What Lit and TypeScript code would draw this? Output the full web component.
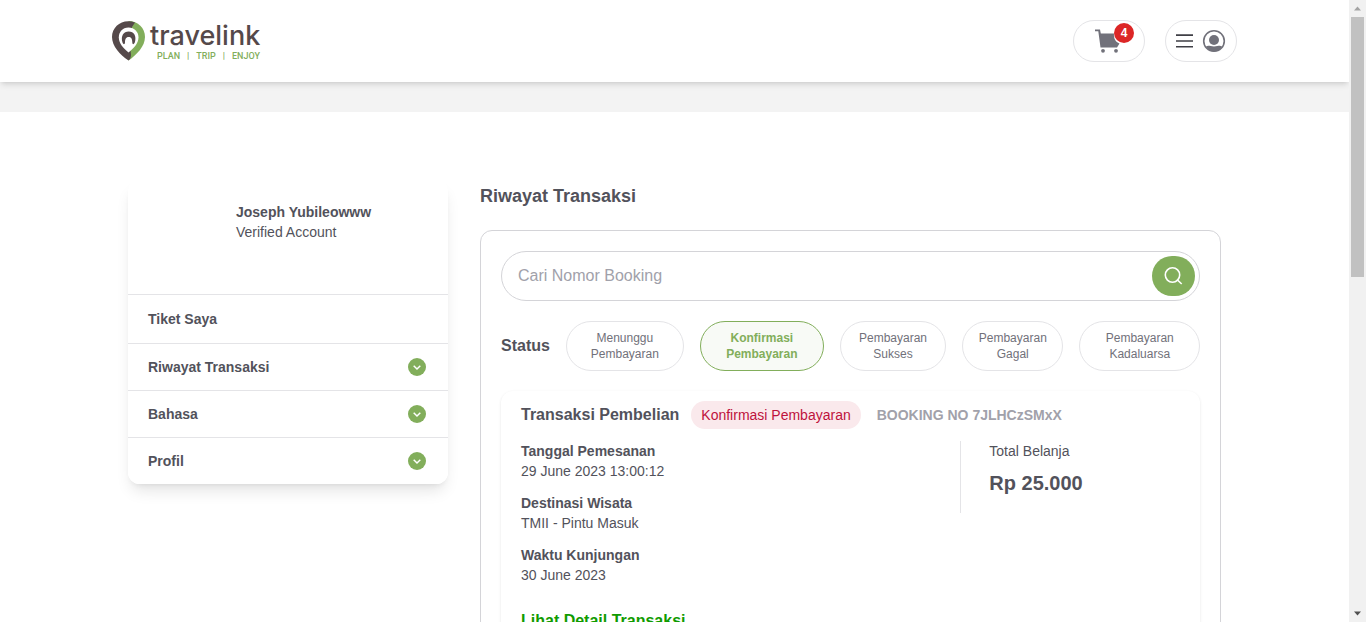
import { LitElement, html, css } from "lit";
import { customElement, state } from "lit/decorators.js";

const GREEN = "#82ae5b";

@customElement("travelink-logo")
class TravelinkLogo extends LitElement {
  static styles = css`
    :host { display: block; }
    .logo { display: flex; align-items: center; gap: 5px; text-decoration: none; }
    .mark { width: 33px; height: 40px; display: block; }
    .words { display: flex; flex-direction: column; padding-top: 2px; }
    .name { font: 500 27px/29px Inter, sans-serif; color: #55494a; }
    .tag {
      display: flex; gap: 7px; padding-left: 7px;
      font: 500 9px/13px Roboto, sans-serif; color: #82ae5b;
    }
  `;
  render() {
    return html`
      <a class="logo" href="#" aria-label="travelink">
        <svg class="mark" viewBox="0 0 33 40" aria-hidden="true">
          <path d="M16.500 0C26 0 33 7 33 16C33 25 25 33.500 16.500 39.500Z" fill="${GREEN}" />
          <path d="M23 1.500C11 -3 0 5 0 16C0 25 8 34 16.500 39.500C19.500 37 19.500 33 18 28L20 6Z" fill="#55494a" />
          <path d="M16.500 6.500C10.500 6.500 6.800 11 6.800 16.500C6.800 22 11 27 16.500 31.500C22 27 26.500 22 26.500 16.500C26.500 11 22.500 6.500 16.500 6.500Z" fill="#fff" />
          <path d="M10.500 21.500C8.500 15 11.500 10.500 16.700 10.500C22 10.500 24.800 15 22.800 21.500C21.500 24 20.500 23.500 20.300 21.500C20.300 17.500 19 16 16.700 16C14.400 16 13 17.500 13 21.500C12.800 23.500 11.500 24 10.500 21.500Z" fill="#55494a" />
        </svg>
        <span class="words">
          <span class="name">travelink</span>
          <span class="tag"><span>PLAN</span><span>|</span><span>TRIP</span><span>|</span><span>ENJOY</span></span>
        </span>
      </a>
    `;
  }
}

@customElement("app-header")
class AppHeader extends LitElement {
  static styles = css`
    :host { display: block; position: relative; z-index: 1; }
    .bar {
      box-sizing: border-box; height: 82px; padding: 0 112px;
      display: flex; align-items: center; justify-content: space-between;
      background: #fff;
      box-shadow: 0 4px 6px -1px rgba(0, 0, 0, .1), 0 2px 4px -2px rgba(0, 0, 0, .1);
    }
    .actions { display: flex; gap: 20px; }
    .pill {
      box-sizing: border-box; width: 72px; height: 42px; padding: 0;
      display: flex; align-items: center; justify-content: center; gap: 9px;
      border: 1px solid #e4e4e7; border-radius: 21px; background: #fff;
      position: relative; cursor: pointer;
    }
    .cart { width: 28px; height: 24px; }
    .count {
      position: absolute; top: 2px; right: 10px;
      width: 20px; height: 20px; border-radius: 50%;
      background: #dc2626; color: #fff;
      font: 700 12px/20px "Liberation Sans", Arial, sans-serif; text-align: center;
    }
    .lines { width: 17px; height: 14px; }
    .user { width: 24px; height: 24px; }
  `;
  render() {
    return html`
      <header class="bar">
        <travelink-logo></travelink-logo>
        <div class="actions">
          <button class="pill" aria-label="Cart">
            <svg class="cart" viewBox="0 0 28 24" fill="#71717a" aria-hidden="true">
              <path d="M0 .5H5L5.800 4.500H19C18.500 9.500 20.500 13 24.500 14.500L22 18.500H5.500L3.300 2.200H0Z" />
              <circle cx="8" cy="21.800" r="1.900" /><circle cx="21" cy="21.800" r="1.900" />
            </svg>
            <span class="count">4</span>
          </button>
          <button class="pill" aria-label="Menu">
            <svg class="lines" viewBox="0 0 17 14" aria-hidden="true">
              <path d="M0 0.300H17V1.900H0ZM0 6.200H17V7.800H0ZM0 12H17V13.600H0Z" fill="#3f3f46" />
            </svg>
            <svg class="user" viewBox="0 0 24 24" aria-hidden="true">
              <circle cx="12" cy="12" r="10.300" fill="none" stroke="#71717a" stroke-width="1.600" />
              <circle cx="12" cy="11" r="5" fill="#71717a" />
              <path d="M4 17.500C6.500 16 8 17.500 12 17.500S17.500 16 20 17.500C18 21 15.500 22.600 12 22.600S6 21 4 17.500Z" fill="#71717a" />
            </svg>
          </button>
        </div>
      </header>
    `;
  }
}

@customElement("account-menu")
class AccountMenu extends LitElement {
  static styles = css`
    :host { display: block; }
    .card {
      border-radius: 12px; background: #fff; overflow: hidden; color: #52525b;
      font: 14px/20px "Liberation Sans", Arial, sans-serif;
    }
    .frame {
      border-radius: 12px;
      box-shadow: 0 10px 15px -3px rgba(0, 0, 0, .1), 0 4px 6px -4px rgba(0, 0, 0, .1);
    }
    .profile { height: 92px; padding: 22px 20px 0 108px; }
    .name { font-weight: 700; }
    .item {
      box-sizing: border-box; width: 100%; min-height: 47px; padding: 0 20px;
      display: flex; align-items: center; justify-content: space-between;
      border: 0; border-top: 1px solid #e4e4e7; background: #fff;
      font: inherit; font-weight: 700; color: inherit; text-decoration: none; cursor: pointer;
    }
    a.item { min-height: 49px; }
    .chevron { width: 22px; height: 22px; }
  `;
  render() {
    return html`
      <nav class="frame">
        <div class="card">
          <div class="profile">
            <div class="name">Joseph Yubileowww</div>
            <div>Verified Account</div>
          </div>
          <a class="item" href="#">Tiket Saya</a>
          ${["Riwayat Transaksi", "Bahasa", "Profil"].map((label) => html`
            <button class="item">
              ${label}
              <svg class="chevron" viewBox="0 0 22 22" aria-hidden="true">
                <circle cx="11" cy="11" r="9" fill="${GREEN}" />
                <path d="M7.700 9.800L11 13L14.300 9.800" fill="none" stroke="#fff" stroke-width="1.500" />
              </svg>
            </button>`)}
        </div>
      </nav>
    `;
  }
}

@customElement("transaction-card")
class TransactionCard extends LitElement {
  static styles = css`
    :host { display: block; }
    .card {
      padding: 10px 20px 20px; border-radius: 12px; background: #fff;
      box-shadow: 0 1px 3px rgba(0, 0, 0, .1);
      color: #52525b; font: 14px/20px "Liberation Sans", Arial, sans-serif;
    }
    .head { display: flex; align-items: center; }
    .title { margin: 0 12px 0 0; font-size: 16px; line-height: 24px; }
    .badge {
      padding: 4px 10px; border-radius: 14px; margin-right: 16px;
      background: #fae9ec; color: #be123c;
    }
    .booking { font-weight: 700; color: #a1a1aa; }
    .body { display: grid; grid-template-columns: 2fr 1fr; align-items: start; margin-top: 12px; }
    .fields { margin: 0; display: grid; gap: 12px; }
    dt { font-weight: 700; }
    dd { margin: 0; }
    .total { padding: 0 0 16px 28px; border-left: 1px solid #e4e4e7; }
    .amount { margin-top: 8px; font-size: 20px; line-height: 28px; font-weight: 700; }
    .more {
      display: inline-block; margin-top: 24px;
      font-size: 16px; line-height: 24px; font-weight: 700; color: #109b00; text-decoration: none;
    }
  `;
  render() {
    const fields = [
      ["Tanggal Pemesanan", "29 June 2023 13:00:12"],
      ["Destinasi Wisata", "TMII - Pintu Masuk"],
      ["Waktu Kunjungan", "30 June 2023"],
    ];
    return html`
      <article class="card">
        <div class="head">
          <h2 class="title">Transaksi Pembelian</h2>
          <span class="badge">Konfirmasi Pembayaran</span>
          <span class="booking">BOOKING NO 7JLHCzSMxX</span>
        </div>
        <div class="body">
          <dl class="fields">
            ${fields.map(([k, v]) => html`<div><dt>${k}</dt><dd>${v}</dd></div>`)}
          </dl>
          <div class="total">
            <div>Total Belanja</div>
            <div class="amount">Rp 25.000</div>
          </div>
        </div>
        <a class="more" href="#">Lihat Detail Transaksi</a>
      </article>
    `;
  }
}

@customElement("transaction-history")
class TransactionHistory extends LitElement {
  @state() private active = "Konfirmasi Pembayaran";

  static styles = css`
    :host { display: block; color: #52525b; font: 14px/20px "Liberation Sans", Arial, sans-serif; }
    .heading { margin: 0 0 18px; font-size: 18px; line-height: 32px; }
    .panel { padding: 20px; border: 1px solid #d4d4d8; border-radius: 12px; display: grid; gap: 20px; }
    .search {
      box-sizing: border-box; height: 50px; padding: 0 4px 0 16px;
      display: flex; align-items: center;
      border: 1px solid #d4d4d8; border-radius: 25px;
    }
    .field {
      flex: 1; min-width: 0; padding: 0; border: 0; outline: 0; background: none;
      font: 16px/24px "Liberation Sans", Arial, sans-serif; color: #52525b;
    }
    .field::placeholder { color: #a1a1aa; opacity: 1; }
    .go {
      width: 43px; height: 40px; padding: 0; border: 0; border-radius: 20px; background: #82ae5b;
      display: flex; align-items: center; justify-content: center; cursor: pointer;
    }
    .glass { width: 20px; height: 20px; }
    .status { display: flex; align-items: center; gap: 16px; }
    .label { font-size: 16px; font-weight: 700; }
    .pill {
      height: 50px; padding: 0 15px; border: 1px solid #e4e4e7; border-radius: 25px; background: #fff;
      font: 12px/16px "Liberation Sans", Arial, sans-serif; color: #71717a; cursor: pointer;
    }
    .pill[aria-pressed="true"] {
      border-color: #82ae5b; background: #f8faf6; color: #82ae5b; font-weight: 700;
    }
  `;
  render() {
    const statuses = [
      "Menunggu Pembayaran", "Konfirmasi Pembayaran", "Pembayaran Sukses",
      "Pembayaran Gagal", "Pembayaran Kadaluarsa",
    ];
    return html`
      <h1 class="heading">Riwayat Transaksi</h1>
      <section class="panel">
        <div class="search">
          <input class="field" type="text" placeholder="Cari Nomor Booking" aria-label="Cari Nomor Booking" />
          <button class="go" aria-label="Cari">
            <svg class="glass" viewBox="0 0 20 20" fill="none" stroke="#fff" stroke-width="1.600" aria-hidden="true">
              <circle cx="8.500" cy="9" r="7.200" /><path d="M13 13.500L17.700 18" />
            </svg>
          </button>
        </div>
        <div class="status">
          <span class="label">Status</span>
          ${statuses.map((s) => html`
            <button class="pill" aria-pressed=${s === this.active ? "true" : "false"}
              @click=${() => (this.active = s)}>${s}</button>`)}
        </div>
        <transaction-card></transaction-card>
      </section>
    `;
  }
}

@customElement("app-root")
class AppRoot extends LitElement {
  static styles = css`
    :host { display: flex; height: 100vh; overflow: hidden; background: #fff; }
    .page { flex: 1; min-width: 0; overflow: hidden; }
    .strip { height: 30px; background: #f3f3f3; }
    .main {
      display: grid; grid-template-columns: 320px minmax(0, 1fr); gap: 32px; align-items: start;
      padding: 68px 128px;
    }
    .rail {
      width: 17px; background: #f1f1f1;
      display: flex; flex-direction: column; align-items: center;
    }
    .arrow { width: 17px; height: 17px; flex: none; }
    .track { flex: 1; width: 13px; }
    .thumb { height: 44.2%; background: #c1c1c1; }
  `;
  render() {
    return html`
      <div class="page">
        <app-header></app-header>
        <div class="strip"></div>
        <main class="main">
          <account-menu></account-menu>
          <transaction-history></transaction-history>
        </main>
      </div>
      <div class="rail" aria-hidden="true">
        <svg class="arrow" viewBox="0 0 17 17"><path d="M5 10.500L8.500 6.500L12 10.500Z" fill="#a3a3a3" /></svg>
        <div class="track"><div class="thumb"></div></div>
        <svg class="arrow" viewBox="0 0 17 17"><path d="M5 6.500L8.500 10.500L12 6.500Z" fill="#505050" /></svg>
      </div>
    `;
  }
}
